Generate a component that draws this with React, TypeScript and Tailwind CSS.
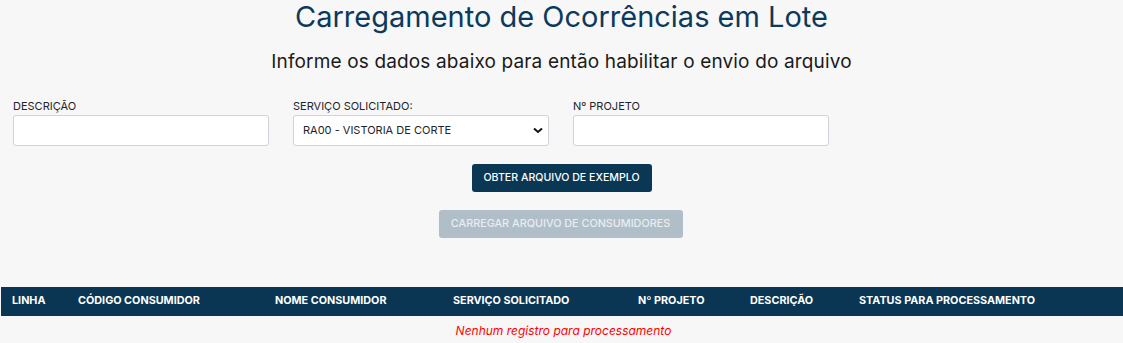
import React from "react";

export default function App() {
  const cols = [
    { label: "LINHA", w: "w-[66px]" },
    { label: "CÓDIGO CONSUMIDOR", w: "w-[197px]" },
    { label: "NOME CONSUMIDOR", w: "w-[178px]" },
    { label: "SERVIÇO SOLICITADO", w: "w-[185px]" },
    { label: "Nº PROJETO", w: "w-[112px]" },
    { label: "DESCRIÇÃO", w: "w-[109px]" },
    { label: "STATUS PARA PROCESSAMENTO", w: "flex-1" },
  ];
  return (
    <div
      className="w-full min-h-[343px] bg-[#f7f7f7] text-[#212529]"
      style={{ fontFamily: "Inter, 'Noto Sans', sans-serif" }}
    >
      <h1 className="text-center text-[29px] leading-[32px] pt-[1px] text-[#0b3a5c] font-normal">
        Carregamento de Ocorrências em Lote
      </h1>
      <h2 className="text-center text-[19px] tracking-[0.15px] leading-[24px] mt-[17px] text-[#1a1a1a] font-normal">
        Informe os dados abaixo para então habilitar o envio do arquivo
      </h2>
      <div className="flex pl-[13px] mt-[25px]">
        <div className="w-[280px]">
          <label className="block text-[11px] leading-[14px] text-[#212529]">DESCRIÇÃO</label>
          <input className="mt-[2px] w-[256px] h-[31px] bg-white border border-[#ced4da] rounded-[3px]" />
        </div>
        <div className="w-[280px]">
          <label className="block text-[11px] leading-[14px] text-[#212529]">SERVIÇO SOLICITADO:</label>
          <div className="relative mt-[2px] w-[256px] h-[31px] bg-white border border-[#ced4da] rounded-[3px] flex items-center pl-[9px] text-[11px]">
            RA00 - VISTORIA DE CORTE
            <svg className="absolute right-[5px] top-[11px]" width="10" height="7" viewBox="0 0 10 7">
              <path d="M1 1.5 L5 5 L9 1.5" fill="none" stroke="#111" strokeWidth="2" />
            </svg>
          </div>
        </div>
        <div className="w-[280px]">
          <label className="block text-[11px] leading-[14px] text-[#212529]">Nº PROJETO</label>
          <input className="mt-[2px] w-[256px] h-[31px] bg-white border border-[#ced4da] rounded-[3px]" />
        </div>
      </div>
      <div className="flex flex-col items-center mt-[18px] gap-[18px]">
        <button className="h-[28px] w-[180px] bg-[#0a3754] text-white text-[10.6px] font-medium rounded-[3px]">
          OBTER ARQUIVO DE EXEMPLO
        </button>
        <button className="h-[28px] w-[244px] -translate-x-[1px] bg-[#b0bec8] text-[#e8edf1] text-[10.8px] font-medium rounded-[3px]">
          CARREGAR ARQUIVO DE CONSUMIDORES
        </button>
      </div>
      <div className="mt-[49px] ml-[1px] h-[29px] bg-[#0a3654] flex items-center pl-[11px] text-white text-[10.8px] font-bold">
        {cols.map((c) => (
          <div key={c.label} className={c.w}>
            {c.label}
          </div>
        ))}
      </div>
      <div className="text-center text-[12px] italic text-[#ff0000] mt-[6px] pl-[4px]">
        Nenhum registro para processamento
      </div>
    </div>
  );
}
